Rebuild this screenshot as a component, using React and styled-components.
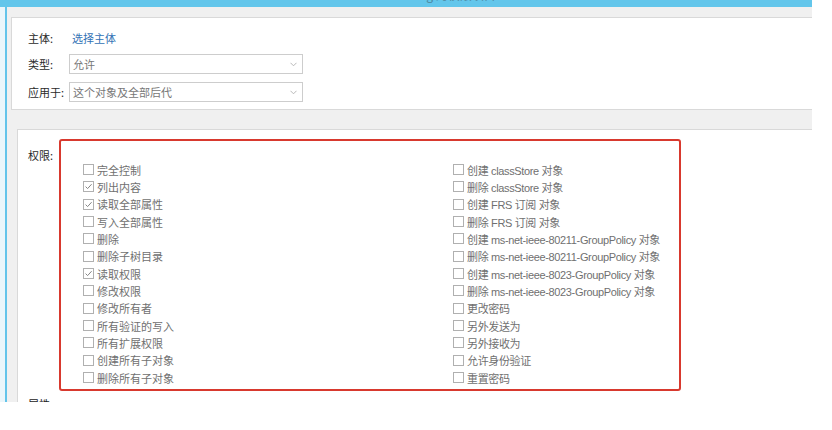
import React from "react";
import styled, { createGlobalStyle } from "styled-components";

const Global = createGlobalStyle`
  html, body { margin: 0; padding: 0; background: #ffffff; }
  body { font-family: "Noto Sans CJK SC", "Noto Sans", sans-serif; }
`;

const Page = styled.div`
  width: 832px;
  height: 430px;
  overflow: hidden;
  background: #ffffff;
`;

const Window = styled.div`
  width: 812px;
  display: flex;
  flex-direction: column;
`;

const TitleBar = styled.div`
  height: 7px;
  background: #63c6eb;
  overflow: hidden;
  display: flex;
  justify-content: center;
  padding-left: 110px;
`;

const TitleText = styled.span`
  font-size: 12px;
  line-height: 14px;
  margin-top: -12px;
  color: #3a4a55;
  opacity: 0.5;
  white-space: nowrap;
`;

const Body = styled.div`
  margin-left: 5px;
  border-left: 2px solid #62c4ea;
  background: #f0f0f0;
  height: 395px;
  padding-top: 10px;
  box-sizing: border-box;
  display: flex;
  flex-direction: column;
  overflow: hidden;
  box-shadow: -5px 0 0 #eaf6fb;
`;

const Panel = styled.div`
  margin-left: ${(p) => p.$indent}px;
  margin-top: ${(p) => p.$mt || 0}px;
  height: ${(p) => p.$h}px;
  flex-shrink: 0;
  background: #ffffff;
  border: 1px solid #d9d9d9;
  border-right: none;
  ${(p) => (p.$open ? "border-bottom: none;" : "")}
  box-sizing: border-box;
  overflow: hidden;
`;

const HeaderGrid = styled.div`
  padding: 10px 0 0 16px;
  display: flex;
  flex-direction: column;
`;

const FieldRow = styled.div`
  display: flex;
  align-items: center;
  height: 20px;
  margin-top: ${(p) => p.$mt || 0}px;
`;

const Label = styled.span`
  width: 41px;
  flex-shrink: 0;
  font-size: 11px;
  color: #2a2a2a;
  white-space: nowrap;
`;

const Link = styled.span`
  font-size: 11px;
  color: #3372b5;
  padding-left: 3px;
`;

const Select = styled.div`
  width: 234px;
  height: 20px;
  box-sizing: border-box;
  border: 1px solid #cdcdcd;
  display: flex;
  align-items: center;
  justify-content: space-between;
  padding: 0 5px 0 3px;
  font-size: 11px;
  color: #777;
`;

const PermArea = styled.div`
  display: flex;
  padding: 9px 0 0 10px;
`;

const PermLabel = styled.span`
  width: 31px;
  flex-shrink: 0;
  font-size: 11px;
  color: #2a2a2a;
  margin-top: 8px;
`;

const RedBox = styled.div`
  width: 622px;
  height: 252px;
  box-sizing: border-box;
  border: 2px solid #d8392e;
  border-radius: 3px;
  padding: 20px 0 0 22px;
  display: flex;
`;

const Column = styled.div`
  width: ${(p) => p.$w}px;
  display: flex;
  flex-direction: column;
  letter-spacing: ${(p) => (p.$tight ? "-0.35px" : "0")};
`;

const Item = styled.div`
  height: 17.33px;
  display: flex;
  align-items: center;
  font-family: "Liberation Sans", "Noto Sans CJK SC", sans-serif;
  font-size: 11px;
  color: #707070;
  white-space: nowrap;
`;

const Box = styled.span`
  width: 11px;
  height: 11px;
  box-sizing: border-box;
  border: 1px solid #b0b0b0;
  background: #fff;
  margin-right: 3px;
  display: inline-flex;
  align-items: center;
  justify-content: center;
  flex-shrink: 0;
`;

const BottomLabel = styled.span`
  display: block;
  font-size: 11px;
  color: #222;
  padding: 5px 0 0 10px;
`;

const Chevron = () => (
  <svg width="7" height="5" viewBox="0 0 7 5">
    <path d="M0.5 0.8 L3.5 3.8 L6.5 0.8" fill="none" stroke="#b0b0b0" strokeWidth="0.9" />
  </svg>
);

const Check = () => (
  <svg width="9" height="9" viewBox="0 0 9 9">
    <path d="M1.6 4.6 L3.6 6.6 L7.6 2.2" fill="none" stroke="#858585" strokeWidth="1" />
  </svg>
);

const left = [
  ["完全控制", false],
  ["列出内容", true],
  ["读取全部属性", true],
  ["写入全部属性", false],
  ["删除", false],
  ["删除子树目录", false],
  ["读取权限", true],
  ["修改权限", false],
  ["修改所有者", false],
  ["所有验证的写入", false],
  ["所有扩展权限", false],
  ["创建所有子对象", false],
  ["删除所有子对象", false],
];

const right = [
  "创建 classStore 对象",
  "删除 classStore 对象",
  "创建 FRS 订阅 对象",
  "删除 FRS 订阅 对象",
  "创建 ms-net-ieee-80211-GroupPolicy 对象",
  "删除 ms-net-ieee-80211-GroupPolicy 对象",
  "创建 ms-net-ieee-8023-GroupPolicy 对象",
  "删除 ms-net-ieee-8023-GroupPolicy 对象",
  "更改密码",
  "另外发送为",
  "另外接收为",
  "允许身份验证",
  "重置密码",
];

const CheckItem = ({ label, checked }) => (
  <Item>
    <Box>{checked && <Check />}</Box>
    {label}
  </Item>
);

export default function App() {
  return (
    <Page>
      <Global />
      <Window>
        <TitleBar>
          <TitleText>g 的权限项目</TitleText>
        </TitleBar>
        <Body>
          <Panel $indent={4} $h={93}>
            <HeaderGrid>
              <FieldRow>
                <Label>主体:</Label>
                <Link>选择主体</Link>
              </FieldRow>
              <FieldRow $mt={6}>
                <Label>类型:</Label>
                <Select>
                  <span>允许</span>
                  <Chevron />
                </Select>
              </FieldRow>
              <FieldRow $mt={8}>
                <Label>应用于:</Label>
                <Select>
                  <span>这个对象及全部后代</span>
                  <Chevron />
                </Select>
              </FieldRow>
            </HeaderGrid>
          </Panel>
          <Panel $indent={10} $mt={19} $h={274} $open>
            <PermArea>
              <PermLabel>权限:</PermLabel>
              <RedBox>
                <Column $w={370}>
                  {left.map(([l, c]) => (
                    <CheckItem key={l} label={l} checked={c} />
                  ))}
                </Column>
                <Column $w={220} $tight>
                  {right.map((l) => (
                    <CheckItem key={l} label={l} checked={false} />
                  ))}
                </Column>
              </RedBox>
            </PermArea>
            <BottomLabel>属性:</BottomLabel>
          </Panel>
        </Body>
      </Window>
    </Page>
  );
}
